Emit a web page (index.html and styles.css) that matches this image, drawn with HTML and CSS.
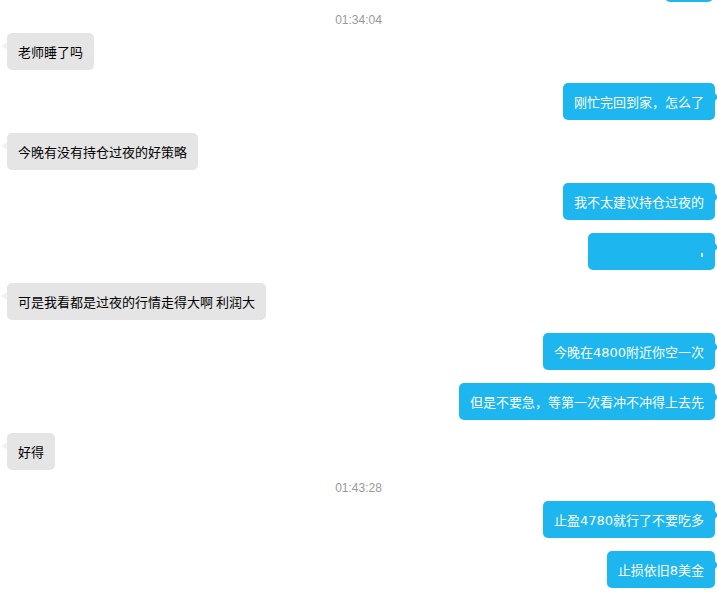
FILE: index.html
```html
<!DOCTYPE html>
<html lang="zh-CN">
<head>
<meta charset="utf-8">
<title>聊天记录</title>
<link rel="stylesheet" href="styles.css">
</head>
<body>
<div class="chat">
  <div class="row right first"><div class="bubble out stub"></div></div>
  <div class="time">01:34:04</div>
  <div class="row left"><div class="bubble in">老师睡了吗</div></div>
  <div class="row right"><div class="bubble out">刚忙完回到家，怎么了</div></div>
  <div class="row left"><div class="bubble in">今晚有没有持仓过夜的好策略</div></div>
  <div class="row right"><div class="bubble out">我不太建议持仓过夜的</div></div>
  <div class="row right"><div class="bubble out blank"><span class="dot"></span></div></div>
  <div class="row left"><div class="bubble in">可是我看都是过夜的行情走得大啊 利润大</div></div>
  <div class="row right"><div class="bubble out">今晚在<span class="num">4800</span>附近你空一次</div></div>
  <div class="row right"><div class="bubble out">但是不要急，等第一次看冲不冲得上去先</div></div>
  <div class="row left"><div class="bubble in">好得</div></div>
  <div class="time">01:43:28</div>
  <div class="row right"><div class="bubble out">止盈<span class="num">4780</span>就行了不要吃多</div></div>
  <div class="row right"><div class="bubble out">止损依旧<span class="num">8</span>美金</div></div>
</div>
</body>
</html>
```

FILE: styles.css
```css
html, body {
  margin: 0;
  padding: 0;
  background: #ffffff;
}
body {
  width: 717px;
  height: 592px;
  overflow: hidden;
  font-family: "Noto Sans CJK SC", "Microsoft YaHei", sans-serif;
}
.chat {
  display: flex;
  flex-direction: column;
}
.row {
  display: flex;
  margin-bottom: 13px;
}
.row.first {
  margin-top: -35px;
}
.row.left {
  justify-content: flex-start;
  padding-left: 7px;
}
.row.right {
  justify-content: flex-end;
  padding-right: 2px;
}
.time {
  height: 18px;
  line-height: 22px;
  margin-top: -6px;
  margin-bottom: 6px;
  text-align: center;
  font-family: "Liberation Sans", Arial, sans-serif;
  font-size: 12px;
  color: #999999;
}
.bubble {
  position: relative;
  height: 37px;
  line-height: 37px;
  padding: 0 11px;
  border-radius: 5px;
  font-size: 13px;
  white-space: nowrap;
  box-sizing: border-box;
}
.num {
  font-family: "DejaVu Sans", sans-serif;
  font-size: 13px;
}
.bubble.in {
  background: #e5e5e5;
  color: #000000;
}
.bubble.out {
  background: #1db6ef;
  color: #ffffff;
}
.bubble.in::before {
  content: "";
  position: absolute;
  left: -6px;
  top: 9px;
  border-style: solid;
  border-width: 4px 6px 4px 0;
  border-color: transparent #f2f2f2 transparent transparent;
}
.bubble.out::after {
  content: "";
  position: absolute;
  right: -3px;
  top: 10px;
  border-style: solid;
  border-width: 4px 0 4px 3px;
  border-color: transparent transparent transparent #1db6ef;
}
.bubble.stub {
  width: 48px;
  margin-right: 2px;
}
.bubble.stub::after {
  display: none;
}
.bubble.blank {
  width: 127px;
  display: flex;
  justify-content: flex-end;
  align-items: center;
  padding-right: 12px;
}
.dot {
  display: block;
  width: 2px;
  height: 4px;
  margin-top: 6px;
  background: #d8f2fc;
}
```
